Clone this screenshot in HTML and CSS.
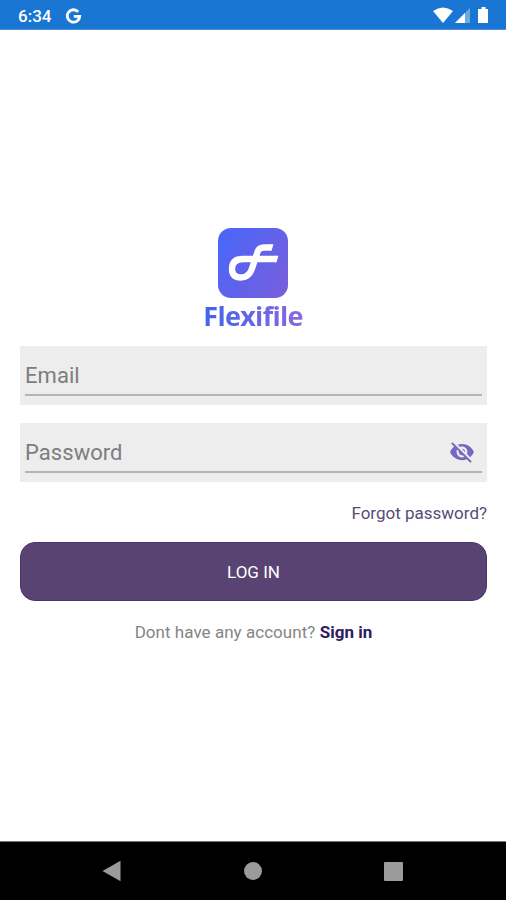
FILE: index.html
```html
<!DOCTYPE html>
<html lang="en">

<head>
    <meta charset="UTF-8">
    <meta name="viewport" content="width=device-width, initial-scale=1.0">
    <title>Flexifile</title>
    <link rel="stylesheet" href="styles.css">
</head>

<body>
    <!-- status bar -->
    <header class="status">
        <span class="time">6:34</span>
        <svg class="google" width="17" height="16" viewBox="0 0 17 16">
            <path d="M13.2 3.9A6.2 6.2 0 1 0 14.7 8.3H8.8" fill="none" stroke="#fff" stroke-width="2.8" />
        </svg>
        <svg class="signals" width="56" height="18" viewBox="0 0 56 18">
            <path d="M0 4Q10 -3 20 4L10 16Z" fill="#fff" />
            <path d="M22 16L37 1V16Z" fill="#6ea9e2" />
            <path d="M22 16L32 6V16Z" fill="#fff" />
            <path d="M48.5 0h4v2h2.5v14H45V2h3.5z" fill="#fff" />
        </svg>
    </header>

    <!-- login form -->
    <main class="login">
        <div class="brand">
            <svg width="70" height="70" viewBox="0 0 70 70">
                <defs>
                    <linearGradient id="logoBg" x1="0" y1="0.2" x2="1" y2="0.8">
                        <stop offset="0" stop-color="#4a66f8" />
                        <stop offset="1" stop-color="#765fdd" />
                    </linearGradient>
                </defs>
                <rect width="70" height="70" rx="13" fill="url(#logoBg)" />
                <path d="M53 19.5H46Q41 19.5 39.5 24L34.5 39Q31.5 49.5 23 49.5Q14 49.5 14 41Q14 31 25 31H58" fill="none" stroke="#fff" stroke-width="6.3" />
                <path d="M52 16.35H55.5L53.5 22.65H52ZM57 27.85H60.5L58.5 34.15H57Z" fill="#fff" />
            </svg>
            <h1>Flexifile</h1>
        </div>
        <div class="field">
            <div class="line">Email</div>
        </div>
        <div class="field">
            <div class="line">Password
                <svg class="eye" width="26" height="26" viewBox="0 0 24 24">
                    <path fill="#7867c0" d="M12 7c2.76 0 5 2.24 5 5 0 .65-.13 1.26-.36 1.83l2.92 2.92c1.51-1.26 2.7-2.89 3.43-4.75-1.73-4.39-6-7.5-11-7.5-1.4 0-2.74.25-3.98.7l2.16 2.16C10.74 7.13 11.35 7 12 7zM2 4.27l2.28 2.28.46.46C3.08 8.3 1.78 10.02 1 12c1.73 4.39 6 7.5 11 7.5 1.55 0 3.03-.3 4.38-.84l.42.42L19.73 22 21 20.73 3.27 3 2 4.27zM7.53 9.8l1.55 1.55c-.05.21-.08.43-.08.65 0 1.66 1.34 3 3 3 .22 0 .44-.03.65-.08l1.55 1.55c-.67.33-1.41.53-2.2.53-2.76 0-5-2.24-5-5 0-.79.2-1.53.53-2.2zm4.31-.78l3.15 3.15.02-.16c0-1.66-1.34-3-3-3l-.17.01z" />
                </svg>
            </div>
        </div>
        <a class="forgot">Forgot password?</a>
        <button class="submit">LOG IN</button>
        <p class="signup">Dont have any account? <b>Sign in</b></p>
    </main>

    <!-- android navigation -->
    <nav class="navbar">
        <svg width="20" height="22" viewBox="0 0 20 22">
            <path d="M0.5 11L18.5 0.7V21.3Z" fill="#9b9b9b" />
        </svg>
        <span class="home"></span>
        <span class="recent"></span>
    </nav>
</body>

</html>
```
FILE: styles.css
```css
* {
    margin: 0;
    padding: 0;
    box-sizing: border-box;
}

body {
    display: flex;
    flex-direction: column;
    height: 900px;
    background: #fff;
    font-family: Roboto, "Liberation Sans", sans-serif;
}

.status {
    display: flex;
    align-items: center;
    height: 30px;
    padding: 2px 17px 0 18px;
    background: #1976d2;
    border-bottom: 1px solid #4c91da;
    color: #fff;
}

.time {
    width: 47px;
    font-size: 17px;
    font-weight: 500;
}

.signals {
    margin-left: auto;
}

.login {
    flex: 1;
    display: flex;
    flex-direction: column;
    padding: 198px 19px 0 20px;
}

.brand {
    display: flex;
    flex-direction: column;
    align-items: center;
    height: 118px;
    padding-right: 1px;
}

.brand svg {
    flex: none;
}

.brand h1 {
    font: bold 27px/36px "Open Sans", "Noto Sans", sans-serif;
    letter-spacing: -0.7px;
    background: linear-gradient(90deg, #4064ed, #8a69dc);
    -webkit-background-clip: text;
    background-clip: text;
    color: transparent;
}

.field {
    height: 59px;
    margin-bottom: 18px;
    padding: 0 5px;
    background: #ededed;
}

.line {
    display: flex;
    align-items: center;
    justify-content: space-between;
    height: 50px;
    padding-top: 10px;
    border-bottom: 2px solid #b5b5b5;
    color: #7d7d7d;
    font-size: 22px;
    letter-spacing: 0.05px;
}

.eye {
    margin-right: 7px;
}

.forgot {
    align-self: flex-end;
    height: 42px;
    line-height: 27px;
    color: #594b78;
    font-size: 17px;
}

.submit {
    height: 59px;
    border: 1px solid #4b3570;
    border-radius: 15px;
    background: #594373;
    color: #fff;
    font: 17px Roboto, sans-serif;
}

.signup {
    margin-top: 20px;
    text-align: center;
    color: #858585;
    font-size: 17px;
    line-height: 22px;
    letter-spacing: 0.04px;
}

.signup b {
    color: #301b62;
}

.navbar {
    display: flex;
    align-items: center;
    justify-content: space-between;
    height: 59px;
    padding: 0 103px 0 102px;
    background: #000;
    border-top: 1px solid #777;
}

.home {
    width: 18px;
    height: 18px;
    border-radius: 50%;
    background: #9b9b9b;
}

.recent {
    width: 19px;
    height: 19px;
    border-radius: 1px;
    background: #9b9b9b;
}
```
